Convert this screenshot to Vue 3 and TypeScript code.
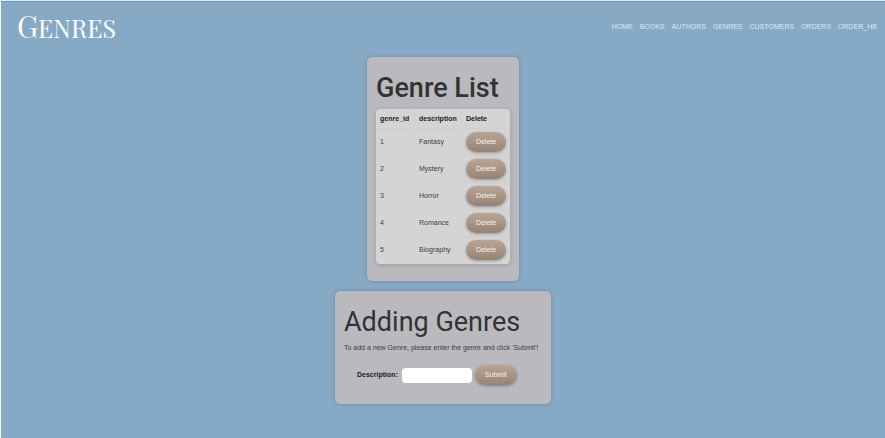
<script setup lang="ts">
import { ref } from 'vue'

interface Genre {
  genre_id: number
  description: string
}

const links: string[] = ['Home', 'Books', 'Authors', 'Genres', 'Customers', 'Orders', 'Order_HB']

const genres = ref<Genre[]>([
  { genre_id: 1, description: 'Fantasy' },
  { genre_id: 2, description: 'Mystery' },
  { genre_id: 3, description: 'Horror' },
  { genre_id: 4, description: 'Romance' },
  { genre_id: 5, description: 'Biography' },
])

const description = ref('')

function removeGenre(id: number) {
  genres.value = genres.value.filter((g) => g.genre_id !== id)
}

function addGenre() {
  const text = description.value.trim()
  if (!text) return
  const nextId = Math.max(0, ...genres.value.map((g) => g.genre_id)) + 1
  genres.value.push({ genre_id: nextId, description: text })
  description.value = ''
}
</script>

<template>
  <div class="page">
    <header class="header">
      <div class="brand">Genres</div>
      <nav class="nav">
        <a v-for="link in links" :key="link" :href="'#' + link.toLowerCase()">{{ link }}</a>
      </nav>
    </header>

    <main class="content">
      <section class="card list-card">
        <h1 class="title strong">Genre List</h1>
        <table class="table">
          <thead>
            <tr>
              <th scope="col">genre_id</th>
              <th scope="col">description</th>
              <th scope="col">Delete</th>
            </tr>
          </thead>
          <tbody>
            <tr v-for="genre in genres" :key="genre.genre_id">
              <td>{{ genre.genre_id }}</td>
              <td>{{ genre.description }}</td>
              <td>
                <button type="button" class="button" @click="removeGenre(genre.genre_id)">Delete</button>
              </td>
            </tr>
          </tbody>
        </table>
      </section>

      <section class="card form-card">
        <h2 class="title">Adding Genres</h2>
        <p class="hint">To add a new Genre, please enter the genre and click 'Submit'!</p>
        <form class="form" @submit.prevent="addGenre">
          <label for="description">Description:</label>
          <input id="description" v-model="description" type="text" />
          <button type="submit" class="button">Submit</button>
        </form>
      </section>
    </main>
  </div>
</template>

<style>
body {
  background: #86aac6;
}
</style>

<style scoped>
.page {
  box-sizing: border-box;
  min-height: 100vh;
  border-top: 1px solid #e6eef3;
  border-left: 1px solid #f4f8fa;
  background: #86aac6;
  color: #3c3c3e;
  font-family: "Liberation Sans", Arial, sans-serif;
  font-size: 7px;
  line-height: 10px;
}

.header {
  display: flex;
  align-items: center;
  justify-content: space-between;
  height: 52px;
  padding: 0 8px 0 16px;
  box-shadow: inset 0 1px #6b97b9;
}

.brand {
  color: #fff;
  font-family: "Playfair Display SC", "Playfair Display", "Liberation Serif", serif;
  font-size: 25px;
  line-height: 40px;
  text-transform: uppercase;
}

.brand::first-letter {
  font-size: 30px;
}

.nav {
  display: flex;
  gap: 7px;
}

.nav a {
  color: #dfe8ec;
  text-decoration: none;
  text-transform: uppercase;
}

.content {
  display: flex;
  flex-direction: column;
  align-items: center;
  gap: 10px;
  padding-top: 4px;
}

.card {
  box-sizing: border-box;
  padding: 9px;
  border-radius: 5px;
  background: #bab9be;
  box-shadow: 0 0 4px rgba(50, 60, 80, 0.3);
}

.list-card {
  padding-bottom: 17px;
}

.form-card {
  min-width: 216px;
}

.title {
  margin: 6px 0 4px;
  color: #333;
  font-family: Roboto, sans-serif;
  font-size: 27px;
  font-weight: 400;
  line-height: 33px;
}

.strong {
  font-weight: 500;
}

.table {
  border-collapse: separate;
  border-spacing: 0;
  border-radius: 4px;
  background: #d4d4d4;
  box-shadow: 0 1px 4px rgba(0, 0, 0, 0.16);
}

.table th,
.table td {
  box-sizing: border-box;
  padding: 3px 4px;
  border-right: 1px solid #cecece;
  border-bottom: 1px solid #cecece;
  text-align: left;
  vertical-align: middle;
}

.table th {
  min-width: 39px;
  padding: 5px 4px 4px;
  color: #222;
}

.table th:nth-child(2) {
  min-width: 47px;
}

.table th:last-child,
.table td:last-child {
  border-right: 0;
}

.table tr:last-child td {
  border-bottom-color: transparent;
}

.button {
  display: block;
  height: 20px;
  padding: 0 10px;
  border: 0;
  border-radius: 10px;
  background: linear-gradient(#b8a595, #978373);
  box-shadow: 0 1px 3px rgba(0, 0, 0, 0.3);
  color: #f5f1ee;
  font: inherit;
  cursor: pointer;
}

.table .button {
  width: 40px;
  padding: 0;
  text-align: center;
}

.hint {
  margin: 0;
}

.form {
  display: flex;
  align-items: center;
  padding: 12px 13px 10px;
}

.form label {
  color: #222;
  font-weight: 700;
}

.form input {
  box-sizing: border-box;
  width: 70px;
  height: 15px;
  margin: 0 3px 0 4px;
  padding: 0 4px;
  border: 0;
  border-radius: 4px;
  background: #fff;
  font: inherit;
}
</style>
